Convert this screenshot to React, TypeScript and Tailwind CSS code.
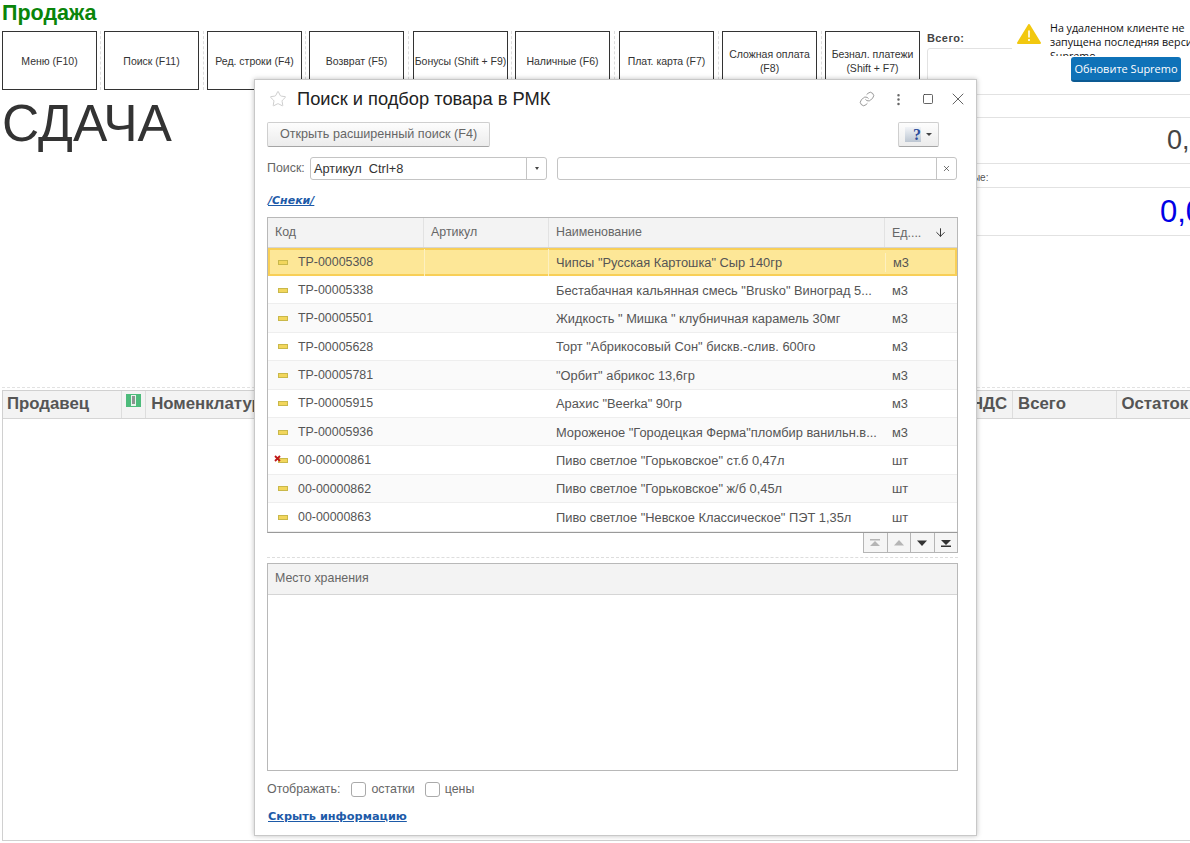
import React from "react";
import { Link, X, Square, Star, EllipsisVertical, ArrowDown } from "lucide-react";

const buttons = [
  "Меню (F10)",
  "Поиск (F11)",
  "Ред. строки (F4)",
  "Возврат (F5)",
  "Бонусы (Shift + F9)",
  "Наличные (F6)",
  "Плат. карта (F7)",
  "Сложная оплата (F8)",
  "Безнал. платежи (Shift + F7)",
];

const gaps = ["", "w-[7px]", "w-[8px]", "w-[7px]", "w-[9px]", "w-[7px]", "w-[9px]", "w-[8px]", "w-[8px]"];

const rows: [string, string, string, boolean?][] = [
  ["ТР-00005308", 'Чипсы "Русская Картошка" Сыр 140гр', "м3"],
  ["ТР-00005338", 'Бестабачная кальянная смесь "Brusko" Виноград 5...', "м3"],
  ["ТР-00005501", 'Жидкость " Мишка " клубничная карамель 30мг', "м3"],
  ["ТР-00005628", 'Торт "Абрикосовый Сон" бискв.-слив. 600го', "м3"],
  ["ТР-00005781", '"Орбит" абрикос 13,6гр', "м3"],
  ["ТР-00005915", 'Арахис "Beerka" 90гр', "м3"],
  ["ТР-00005936", 'Мороженое "Городецкая Ферма"пломбир ванильн.в...', "м3"],
  ["00-00000861", 'Пиво светлое "Горьковское" ст.б 0,47л', "шт", true],
  ["00-00000862", 'Пиво светлое "Горьковское" ж/б 0,45л', "шт"],
  ["00-00000863", 'Пиво светлое "Невское Классическое" ПЭТ 1,35л', "шт"],
];

function RowIcon({ deleted }: { deleted?: boolean }) {
  return (
    <span className="relative w-[10px] h-[5px] bg-[#f2d65c] border border-[#c9b84a] block">
      {deleted && (
        <svg className="absolute left-[-5px] top-[-4px]" width="7" height="7" viewBox="0 0 7 7">
          <path d="M1 1l5 5M6 1l-5 5" stroke="#c01818" strokeWidth="1.8" />
        </svg>
      )}
    </span>
  );
}

function Pager({ dark, kind }: { dark?: boolean; kind: "first" | "up" | "down" | "last" }) {
  const c = dark ? "#333333" : "#b5b5b5";
  return (
    <div className="flex-1 h-full border-r border-b border-[#b5b5b5] first:border-l bg-[#f5f5f5] flex items-center justify-center">
      <svg width="12" height="8" viewBox="0 0 12 8">
        {kind === "first" && <path d="M1 0h10v1.5H1zM6 2l5 5H1z" fill={c} />}
        {kind === "up" && <path d="M6 1l5 5.500H1z" fill={c} />}
        {kind === "down" && <path d="M1 1.500h10L6 7z" fill={c} />}
        {kind === "last" && <path d="M1 1h10L6 6zM1 6.500h10V8H1z" fill={c} />}
      </svg>
    </div>
  );
}

export default function App() {
  return (
    <div className="relative w-[1190px] h-[843px] overflow-hidden bg-white font-['Liberation_Sans',Arial,sans-serif] text-[#333]">
      {/* Background document */}
      <div className="flex flex-col h-full pl-[2px]">
        <div className="flex h-[388px] shrink-0 border-b border-dashed border-[#e2e2e2]">
          <div className="w-[925px] shrink-0">
            <h1 className="h-[31px] pt-px text-[21.5px] leading-[25px] font-bold text-[#0a850a]">Продажа</h1>
            <div className="flex">
              {buttons.map((b, i) => (
                <React.Fragment key={b}>
                  {i > 0 && (
                    <div className={gaps[i] + " flex justify-center"}>
                      <div className="h-[59px] border-l border-dashed border-[#dddddd]" />
                    </div>
                  )}
                  <div className="w-[95px] h-[59px] shrink-0 border border-[#333] flex items-center justify-center text-center text-[10.5px] leading-[14px] text-[#333] whitespace-normal">
                    {b}
                  </div>
                </React.Fragment>
              ))}
            </div>
            <div className="text-[51.5px] leading-[58px] mt-[4px] text-[#333]">СДАЧА</div>
          </div>
          <div className="w-[300px] shrink-0 flex flex-col">
            <div className="h-[48px] pt-[31px] text-[11px] leading-[14px] font-bold text-[#444] tracking-[0.4px]">Всего:</div>
            <div className="h-[47px] border border-[#e2e2e2] rounded-tl-[3px]" />
            <div className="h-[22px]" />
            <div className="h-[47px] border-y border-[#e2e2e2] pl-[240px] text-[27px] leading-[45px] text-[#444]">0,00</div>
            <div className="h-[23px] pl-[11px] text-[10px] leading-[28px] text-[#555]">Наличные:</div>
            <div className="h-[49px] border-y border-[#e2e2e2] pl-[233px] text-[31px] leading-[47px] text-[#0000e6]">0,00</div>
          </div>
        </div>

        <div className="mt-[2px] flex-1 border border-[#d0d0d0] border-r-0 mb-[2px] min-h-0">
          <div className="h-[28px] flex bg-[#f3f3f3] border-b border-[#d5d5d5] text-[16.800px] leading-[26px] font-bold text-[#555]">
            <div className="w-[120px] pl-[4px] border-r border-[#dddddd]">Продавец</div>
            <div className="w-[24px] border-r border-[#dddddd] flex justify-center pt-[3px]">
              <svg width="15" height="13" viewBox="0 0 15 13">
                <rect width="15" height="13" fill="#4dbb7b" />
                <rect x="5" y="1" width="5" height="11" fill="#e8f5ee" />
                <path d="M6 3h3M6 5h3M6 7h3M6 9h3" stroke="#333" strokeWidth="1" />
              </svg>
            </div>
            <div className="w-[830px] pl-[5px] border-r border-[#dddddd]">Номенклатура</div>
            <div className="flex-1 flex justify-end pr-[5px] border-r border-[#dddddd]">НДС</div>
            <div className="w-[105px] pl-[5px] border-r border-[#dddddd]">Всего</div>
            <div className="w-[73px] pl-[4px] whitespace-nowrap overflow-hidden">Остаток</div>
          </div>
        </div>
      </div>

      {/* Update notification */}
      <div className="absolute left-[1012px] top-[20px] w-[178px] h-[66px] bg-white">
        <svg className="absolute left-[5px] top-[4px]" width="24" height="20" viewBox="0 0 24 20">
          <path d="M12 1L23 19H1z" fill="#f2c80f" stroke="#f2c80f" strokeWidth="2" strokeLinejoin="round" />
          <path d="M11.200 6.500h1.600v7h-1.600zM11.200 15h1.600v2h-1.600z" fill="#fff" />
        </svg>
        <div className="absolute left-[38px] top-px w-[140px] h-[35px] overflow-hidden whitespace-nowrap text-[10.700px] leading-[14px] text-[#111] font-['Open_Sans',sans-serif]">
          <div>На удаленном клиенте не</div>
          <div>запущена последняя версия</div>
          <div>Supremo</div>
        </div>
        <div className="absolute left-[59px] top-[37px] w-[110px] h-[25px] rounded-[3px] bg-[#0f72b8] border-b-2 border-[#0c5a93] text-white text-[11px] leading-[23px] text-center font-['Open_Sans',sans-serif] whitespace-nowrap">
          Обновите Supremo
        </div>
      </div>

      {/* Dialog window */}
      <div className="absolute left-[254px] top-[79px] w-[723px] h-[757px] bg-white border border-[#c8c8c8] shadow-[0_0_5px_rgba(0,0,0,0.25)] pl-[12px] pr-[12px] text-[12.400px] text-[#555]">
        <div className="h-[42px] pb-[4px] flex items-center">
          <Star size={18} strokeWidth={1} className="text-[#bdbdbd] ml-[2px] mr-[10px]" />
          <span className="text-[18.300px] text-[#222] flex-1">Поиск и подбор товара в РМК</span>
          <Link size={16} strokeWidth={1} className="text-[#666] mr-[16px]" />
          <EllipsisVertical size={15} strokeWidth={2} className="text-[#666] mr-[16px]" />
          <Square size={12} strokeWidth={1.5} className="text-[#333] mr-[14px]" />
          <X size={20} strokeWidth={1} className="text-[#444] mr-[-4px]" />
        </div>
        <div className="h-[25px] flex justify-between pr-[25px]">
          <div className="w-[223px] h-[25px] rounded-[2px] border border-[#cfcfcf] border-b-[#a5a5a5] bg-gradient-to-b from-[#fdfdfd] to-[#ececec] text-center text-[12.600px] leading-[23px] text-[#666]">
            Открыть расширенный поиск (F4)
          </div>
          <div className="w-[41px] h-[25px] rounded-[2px] border border-[#cfcfcf] border-b-[#a5a5a5] bg-gradient-to-b from-[#fdfdfd] to-[#ececec] flex items-center justify-center gap-[5px]">
            <span className="w-[16px] h-[15px] bg-gradient-to-b from-[#f2f4f7] to-[#bcc6d2] text-[#2b4c9b] font-bold text-[16px] leading-[15px] text-right font-['Liberation_Serif',serif]">?</span>
            <span className="border-x-[3px] border-x-transparent border-t-[3px] border-t-[#444]" />
          </div>
        </div>
        <div className="h-[23px] mt-[10px] flex items-center">
          <span className="w-[43px] text-[#666]">Поиск:</span>
          <div className="w-[237px] h-full border border-[#c4c4c4] rounded-[3px] flex">
            <span className="flex-1 pl-[3px] text-[12.800px] leading-[21px] text-[#333] whitespace-pre">Артикул  Ctrl+8</span>
            <span className="w-[20px] border-l border-[#c4c4c4] flex items-center justify-center">
              <span className="border-x-[2.500px] border-x-transparent border-t-[3px] border-t-[#444]" />
            </span>
          </div>
          <div className="w-[400px] h-full ml-[10px] border border-[#c4c4c4] rounded-[3px] flex justify-end">
            <span className="w-[20px] border-l border-[#c4c4c4] flex items-center justify-center text-[#333]">
              <X size={9} strokeWidth={1.8} />
            </span>
          </div>
        </div>
        <div className="h-[37px] pl-[1px] pt-[13px] text-[11px] leading-[16px] font-bold italic underline text-[#1d5aa8] font-['DejaVu_Sans',sans-serif]">/Снеки/</div>

        {/* Goods table */}
        <div className="w-[691px] h-[316px] border border-[#b8b8b8] border-b-[#9a9a9a]">
          <div className="h-[30px] grid grid-cols-[156px_125px_336px_1fr] bg-[#f3f3f3] border-b border-[#d5d5d5] leading-[28px] text-[#666]">
            <div className="pl-[7px] border-r border-[#e2e2e2]">Код</div>
            <div className="pl-[7px] border-r border-[#e2e2e2]">Артикул</div>
            <div className="pl-[7px] border-r border-[#e2e2e2]">Наименование</div>
            <div className="pl-[7px] flex items-center gap-[13px]">
              Ед....
              <ArrowDown size={13} strokeWidth={1.8} className="text-[#333]" />
            </div>
          </div>
          {rows.map(([code, name, unit, del], i) => (
            <div
              key={code}
              className={
                "grid grid-cols-[156px_125px_336px_1fr] items-center pt-[1px] whitespace-nowrap text-[#555] " +
                (i === 0
                  ? "h-[28px] bg-[#fde797] shadow-[inset_0_0_0_2px_#f8cf57] text-[#444]"
                  : "h-[28.4px] border-b border-[#eeeeee] " + (i % 2 === 0 ? "bg-[#fafafa]" : "bg-white"))
              }
            >
              <div className="pl-[10px] flex items-center gap-[10px]">
                <RowIcon deleted={del} />
                <span>{code}</span>
              </div>
              <div className={i === 0 ? "h-full border-x border-[#fdf0c0]" : ""} />
              <div className="pl-[7px] overflow-hidden text-[12.850px]">{name}</div>
              <div className={"pl-[7px] text-[12.850px] " + (i === 0 ? "border-l border-[#fdf0c0]" : "")}>{unit}</div>
            </div>
          ))}
        </div>
        <div className="h-[20px] w-[691px] flex justify-end">
          <div className="w-[95px] h-full flex">
            <Pager kind="first" />
            <Pager kind="up" />
            <Pager kind="down" dark />
            <Pager kind="last" dark />
          </div>
        </div>
        <div className="w-[691px] h-[5px] border-b border-dashed border-[#dddddd]" />
        <div className="w-[691px] h-[208px] mt-[5px] border border-[#b8b8b8]">
          <div className="h-[31px] bg-[#f3f3f3] border-b border-[#d5d5d5] pl-[7px] leading-[29px] text-[#666]">Место хранения</div>
        </div>
        <div className="h-[18px] mt-[9px] flex items-center">
          <span className="text-[#666]">Отображать:</span>
          <span className="w-[15px] h-[15px] ml-[11px] border border-[#aaaaaa] rounded-[3px]" />
          <span className="ml-[5px] text-[#666]">остатки</span>
          <span className="w-[15px] h-[15px] ml-[10px] border border-[#aaaaaa] rounded-[3px]" />
          <span className="ml-[5px] text-[#666]">цены</span>
        </div>
        <div className="mt-[12px] pl-[1px] text-[11.300px] leading-[14px] font-bold underline text-[#1d5aa8] font-['DejaVu_Sans',sans-serif]">
          Скрыть информацию
        </div>
      </div>
    </div>
  );
}
